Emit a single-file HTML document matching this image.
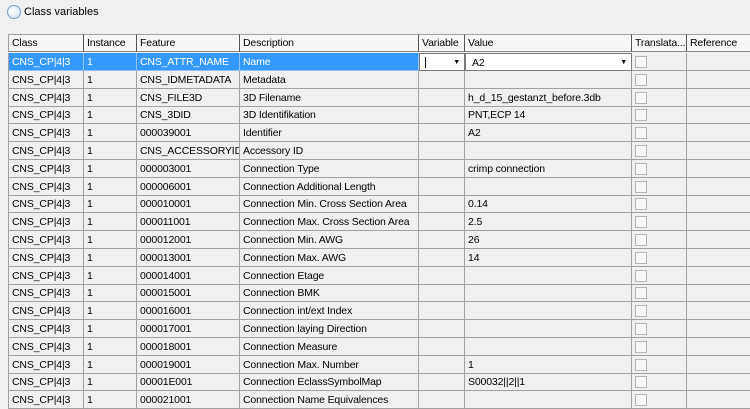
<!DOCTYPE html>
<html><head><meta charset="utf-8"><style>
body{margin:0;width:750px;height:407px;background:#f0f0f0;font-family:"Liberation Sans",sans-serif;font-size:10.5px;color:#000;overflow:hidden;position:relative}
.t{position:absolute;left:8px;top:34px}
.r{position:absolute;left:0;height:18px;width:742px}
.c{position:absolute;top:0;border-right:1px solid #a0a0a0;border-bottom:1px solid #a0a0a0;line-height:18px;padding-left:3px;box-sizing:border-box;height:18px;white-space:nowrap;overflow:hidden;letter-spacing:-0.15px}
.h .c{background:#f7f7f7;border-right:1px solid #555;border-bottom:1px solid #888;border-top:1px solid #a0a0a0;line-height:17px}
.s .c.sel{background:#3399ff;color:#fff;border-color:#8fc3f5}
.cb{position:absolute;left:3px;top:3px;width:10px;height:10px;border:1px solid #b5b5b5;background:#f8f8f8}
</style></head><body>
<div style="position:absolute;left:7px;top:5px;width:12px;height:12px;border-radius:50%;border:1px solid #7a9cc4;background:radial-gradient(circle at 40% 40%,#fff,#cfe0f3)"></div>
<div style="position:absolute;left:24px;top:5px;line-height:14px;font-size:11px">Class variables</div>
<div class="t">
<div class="r h" style="top:0"><div class="c" style="left:0;width:76px;border-left:1px solid #a0a0a0">Class</div><div class="c" style="left:76px;width:53px">Instance</div><div class="c" style="left:129px;width:103px">Feature</div><div class="c" style="left:232px;width:179px">Description</div><div class="c" style="left:411px;width:46px">Variable</div><div class="c" style="left:457px;width:167px">Value</div><div class="c" style="left:624px;width:55px">Translata...</div><div class="c" style="left:679px;width:63px;border-right:none">Reference</div></div>
</div>
<div class="t" id="b" style="top:53px"></div>
<script>
var d=[["CNS_ATTR_NAME","Name",""],["CNS_IDMETADATA","Metadata",""],["CNS_FILE3D","3D Filename","h_d_15_gestanzt_before.3db"],["CNS_3DID","3D Identifikation","PNT,ECP 14"],["000039001","Identifier","A2"],["CNS_ACCESSORYID","Accessory ID",""],["000003001","Connection Type","crimp connection"],["000006001","Connection Additional Length",""],["000010001","Connection Min. Cross Section Area","0.14"],["000011001","Connection Max. Cross Section Area","2.5"],["000012001","Connection Min. AWG","26"],["000013001","Connection Max. AWG","14"],["000014001","Connection Etage",""],["000015001","Connection BMK",""],["000016001","Connection int/ext Index",""],["000017001","Connection laying Direction",""],["000018001","Connection Measure",""],["000019001","Connection Max. Number","1"],["00001E001","Connection EclassSymbolMap","S00032||2||1"],["000021001","Connection Name Equivalences",""]];
var h="";for(var i=0;i<d.length;i++){var t=Math.round(i*17.8);var s=i==0?" s":"";
h+='<div class="r'+s+'" style="top:'+t+'px"><div class="c sel" style="left:0;width:76px;border-left:1px solid #a0a0a0">CNS_CP|4|3</div><div class="c sel" style="left:76px;width:53px">1</div><div class="c sel" style="left:129px;width:103px">'+d[i][0]+'</div><div class="c sel" style="left:232px;width:179px">'+d[i][1]+'</div>';
if(i==0){h+='<div class="c" style="left:411px;width:46px;background:#fff;border:1px solid #7a7a7a"><span style="position:absolute;left:5px;top:3px;width:1px;height:11px;background:#000"></span><span style="position:absolute;right:4px;top:0;font-size:7px">▼</span></div><div class="c" style="left:457px;width:167px;background:#fff;border:1px solid #7a7a7a;padding-left:6px">A2<span style="position:absolute;right:4px;top:0;font-size:7px">▼</span></div>';}
else{h+='<div class="c" style="left:411px;width:46px"></div><div class="c" style="left:457px;width:167px">'+d[i][2]+'</div>';}
h+='<div class="c" style="left:624px;width:55px"><span class="cb"></span></div><div class="c" style="left:679px;width:63px;border-right:none"></div></div>';}
document.getElementById("b").innerHTML=h;
</script>
</body></html>
